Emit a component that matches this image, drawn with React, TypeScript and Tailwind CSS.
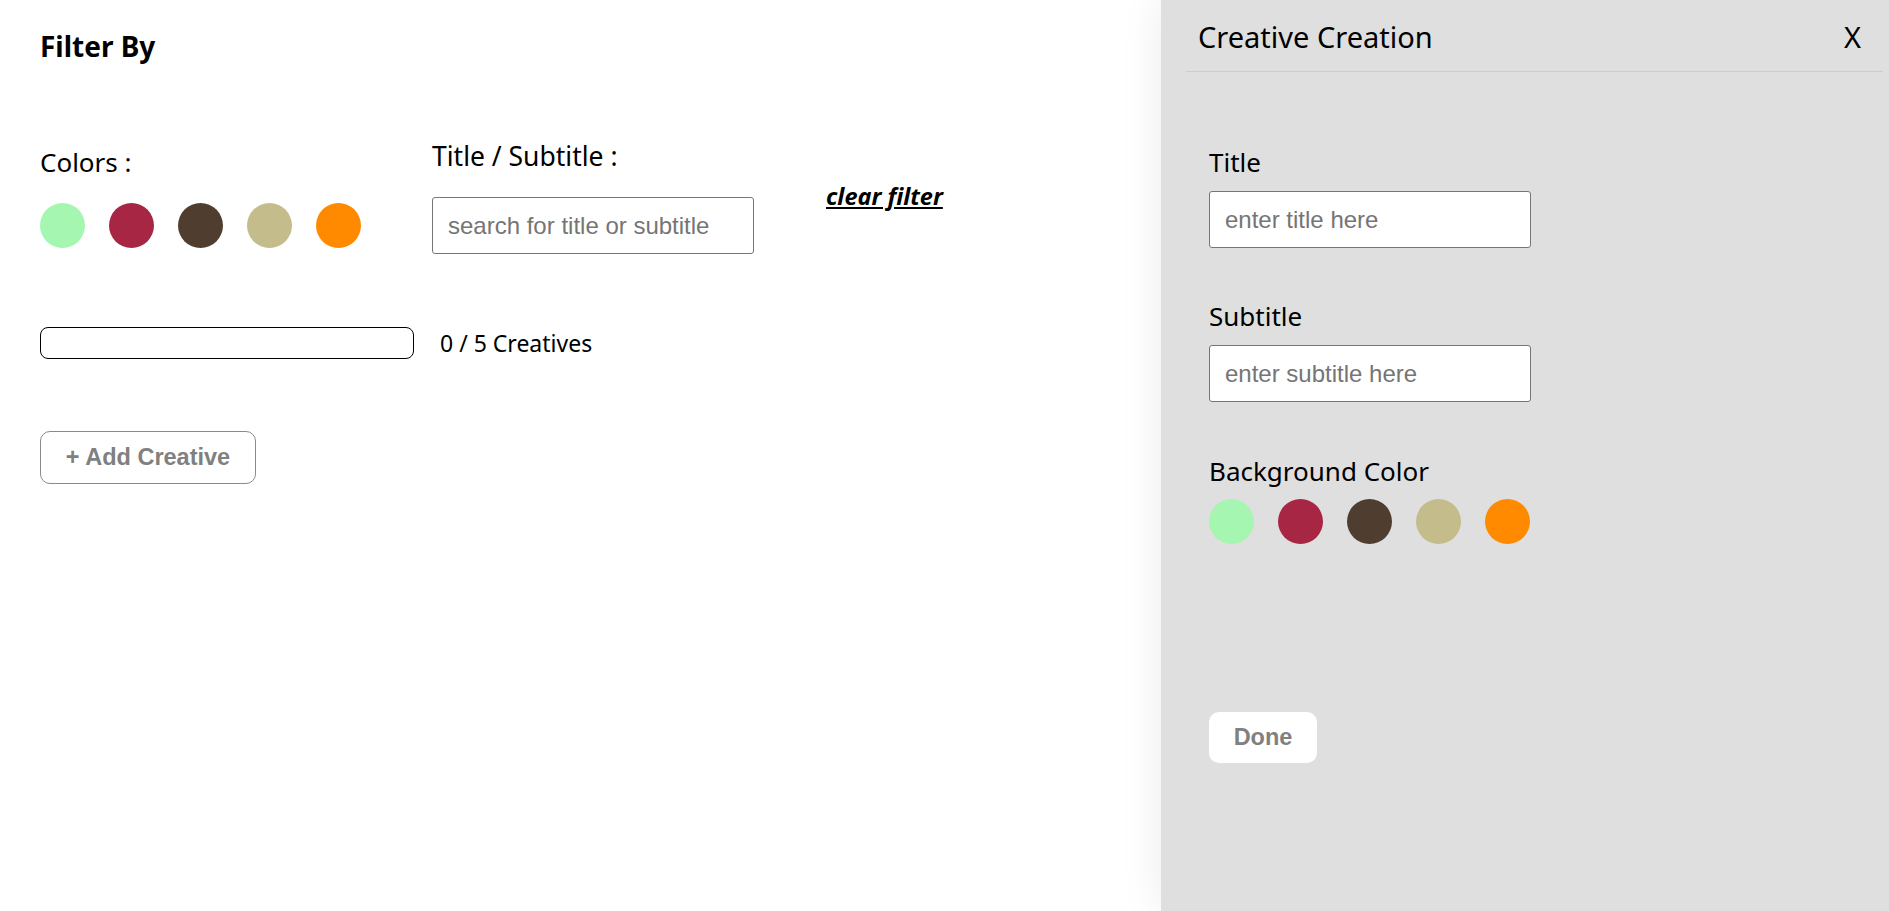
const swatches = ['#a4f6b1', '#a72644', '#4f3e2f', '#c4bc8b', '#ff8a00'];

const sans = "font-['Noto_Sans','Open_Sans',sans-serif]";

function Swatches() {
  return (
    <div className="flex gap-[24px]">
      {swatches.map((c) => (
        <button
          key={c}
          className="h-[45px] w-[45px] rounded-full"
          style={{ backgroundColor: c }}
        />
      ))}
    </div>
  );
}

function TextInput({ placeholder }: { placeholder: string }) {
  return (
    <input
      placeholder={placeholder}
      className="h-[57px] w-[322px] rounded-[3px] border border-[#767676] bg-white pl-[15px] font-['Liberation_Sans',Arial,sans-serif] text-[24px] text-black placeholder:text-[#757575] outline-none"
    />
  );
}

export default function App() {
  return (
    <div className={`flex h-screen w-full bg-white text-black ${sans}`}>
      <main className="flex-1 pl-[40px] pt-[32px]">
        <h2 className="text-[28px] font-bold leading-none">Filter By</h2>

        <div className="mt-[83px] flex items-center">
          <div className="w-[392px]">
            <div className="h-[26px] text-[26px] leading-[26px]">Colors :</div>
            <div className="mt-[28px]">
              <Swatches />
            </div>
          </div>
          <div>
            <div className="h-[26px] text-[26.5px] leading-[26px]">Title / Subtitle :</div>
            <div className="mt-[28px]">
              <TextInput placeholder="search for title or subtitle" />
            </div>
          </div>
          <a
            href="#"
            className="ml-[72px] mt-[42px] self-start text-[23.5px] font-bold italic leading-none underline"
          >
            clear filter
          </a>
        </div>

        <div className="mt-[73px] flex items-center">
          <div className="h-[32px] w-[374px] rounded-[8px] border border-black" />
          <span className="ml-[26px] text-[23px] leading-none">0 / 5 Creatives</span>
        </div>

        <button className="mt-[72px] h-[53px] w-[216px] rounded-[10px] border border-[#8a8a8a] bg-white font-['Liberation_Sans',Arial,sans-serif] text-[23.5px] font-bold text-[#808080]">
          + Add Creative
        </button>
      </main>

      <aside className="h-full w-[728px] bg-[#dfdfdf] shadow-[0_0_40px_rgba(0,0,0,0.08)]">
        <header className="ml-[25px] mr-[6px] flex items-center justify-between border-b border-[#cdcdcd] pb-[20px] pl-[12px] pr-[22px] pt-[22px]">
          <h3 className="text-[29px] leading-none">Creative Creation</h3>
          <button className="text-[29px] leading-none">X</button>
        </header>

        <div className="pl-[48px]">
          <div className="mt-[77px] text-[26px] leading-none">Title</div>
          <div className="mt-[16px]">
            <TextInput placeholder="enter title here" />
          </div>

          <div className="mt-[55px] text-[26px] leading-none">Subtitle</div>
          <div className="mt-[16px]">
            <TextInput placeholder="enter subtitle here" />
          </div>

          <div className="mt-[56px] text-[26px] leading-none">Background Color</div>
          <div className="mt-[15px]">
            <Swatches />
          </div>

          <button className="mt-[168px] h-[51px] w-[108px] rounded-[10px] bg-white font-['Liberation_Sans',Arial,sans-serif] text-[23.5px] font-bold text-[#808080]">
            Done
          </button>
        </div>
      </aside>
    </div>
  );
}
